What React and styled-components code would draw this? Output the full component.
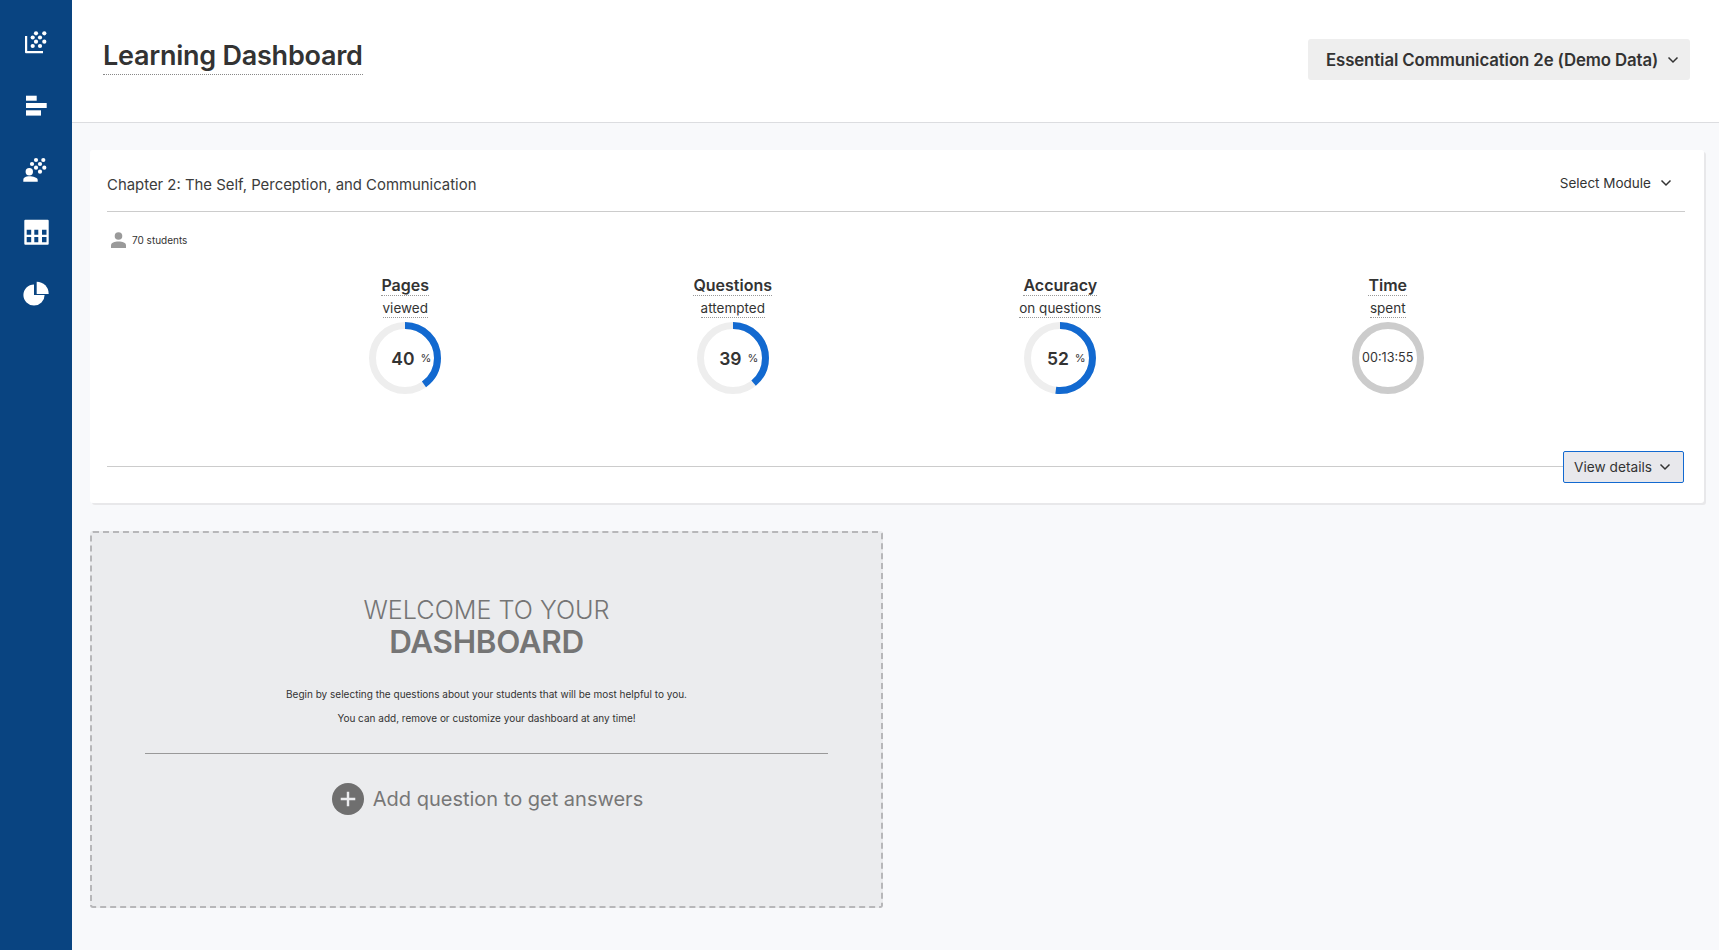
import React from "react";
import styled, { createGlobalStyle } from "styled-components";

const GlobalStyle = createGlobalStyle`
  html, body {
    margin: 0;
    padding: 0;
    background: #f8f9fb;
    font-family: "Inter", "Liberation Sans", sans-serif;
    color: #333;
  }
`;

const Shell = styled.div`
  display: flex;
  height: 950px;
  overflow: hidden;
`;

const Sidebar = styled.nav`
  flex: 0 0 72px;
  background: #094481;
  display: flex;
  flex-direction: column;
  align-items: center;
  padding-top: 25px;
  gap: 26px;
  box-sizing: border-box;
`;

const NavIcon = styled.svg`
  width: 36px;
  height: 36px;
  display: block;
  fill: #fff;
  flex: none;
  margin-top: ${p => p.$shift || 0}px;
`;

const Main = styled.main`
  flex: 1;
  min-width: 0;
`;

const Header = styled.header`
  height: 122px;
  box-sizing: content-box;
  background: #fff;
  border-bottom: 1px solid #dcdde0;
  display: flex;
  justify-content: space-between;
  align-items: flex-start;
  padding: 0 29px 0 31px;
`;

const Title = styled.h1`
  margin: 38px 0 0;
  font-size: 27px;
  line-height: 36px;
  font-weight: 600;
  letter-spacing: -0.25px;
  color: #333;
  border-bottom: 1px dotted #888;
`;

const CourseSelect = styled.div`
  margin-top: 39px;
  width: 382px;
  height: 41px;
  box-sizing: border-box;
  background: #eee;
  border-radius: 3px;
  display: flex;
  align-items: center;
  justify-content: space-between;
  padding: 0 11px 0 18px;
  font-size: 16.8px;
  font-weight: 600;
  letter-spacing: -0.1px;
  color: #333;
  white-space: nowrap;
`;

const Chevron = styled.svg`
  width: 12px;
  height: 8px;
  flex: none;
  fill: none;
  stroke: #333;
  stroke-width: 1.5;
`;

const Content = styled.div`
  padding: 27px 15px 0 18px;
`;

const Card = styled.section`
  height: 352px;
  box-sizing: content-box;
  background: #fff;
  border-radius: 3px;
  box-shadow: 2px 2px 0 #e8e8ea;
  padding: 1px 19px 0 17px;
`;

const CardHead = styled.div`
  height: 61px;
  box-sizing: border-box;
  border-bottom: 1px solid #ccc;
  display: flex;
  justify-content: space-between;
  align-items: center;
  padding-right: 13px;
`;

const Chapter = styled.div`
  font-size: 14.9px;
  color: #3c3c3c;
  padding-top: 7px;
`;

const ModuleSelect = styled.div`
  display: flex;
  align-items: center;
  gap: 9px;
  font-size: 13.5px;
  color: #333;
  padding-top: 4px;
`;

const Students = styled.div`
  display: flex;
  align-items: center;
  gap: 6px;
  height: 16px;
  margin-top: 20px;
  padding-left: 4px;
  font-size: 10px;
  color: #333;
`;

const StudentIcon = styled.svg`
  width: 15px;
  height: 16px;
  fill: #9a9a9a;
`;

const Stats = styled.div`
  display: grid;
  grid-template-columns: repeat(4, 327.5px);
  justify-content: center;
  margin-top: 27px;
  padding-left: 1px;
`;

const Stat = styled.div`
  display: flex;
  flex-direction: column;
  align-items: center;
`;

const StatTitle = styled.div`
  font-size: 16px;
  line-height: 20px;
  font-weight: 600;
  color: #333;
  border-bottom: 1px dotted #999;
`;

const StatSub = styled.div`
  font-size: 13.5px;
  line-height: 18px;
  padding-top: 3px;
  color: #333;
  border-bottom: 1px dotted #999;
  margin-bottom: 4px;
`;

const Ring = styled.div`
  position: relative;
  width: 72px;
  height: 72px;
`;

const RingSvg = styled.svg`
  display: block;
  width: 72px;
  height: 72px;
  transform: rotate(-90deg);
`;

const RingLabel = styled.div`
  position: absolute;
  inset: 0;
  display: flex;
  align-items: center;
  justify-content: center;
`;

const Percent = styled.span`
  font-size: 17.5px;
  font-weight: 600;
  color: #333;
  margin-left: 12px;
`;

const PercentSign = styled.span`
  font-size: 11px;
  color: #333;
  margin-left: 6px;
`;

const TimeText = styled.span`
  font-size: 12.6px;
  color: #333;
  margin-top: -2px;
`;

const CardFoot = styled.div`
  display: flex;
  align-items: center;
  margin-top: 57px;
  padding-right: 1px;
`;

const FootLine = styled.div`
  flex: 1;
  height: 1px;
  background: #ccc;
  margin-bottom: 2px;
`;

const DetailsButton = styled.div`
  width: 121px;
  height: 32px;
  box-sizing: border-box;
  background: #e8e8ec;
  border: 1px solid #1269d0;
  border-radius: 2px;
  display: flex;
  align-items: center;
  justify-content: space-between;
  padding: 0 12px 0 10px;
  font-size: 13.7px;
  color: #333;
`;

const Welcome = styled.section`
  width: 793px;
  height: 377px;
  box-sizing: border-box;
  margin-top: 28px;
  background: #ebecee;
  border: 2px dashed #b7b7b9;
  border-radius: 3px;
  display: flex;
  flex-direction: column;
  align-items: center;
  padding: 63px 53px 0;
`;

const WelcomeTop = styled.div`
  font-size: 25.2px;
  line-height: 28px;
  font-weight: 300;
  color: #757575;
`;

const WelcomeBig = styled.div`
  font-size: 31.4px;
  line-height: 36px;
  font-weight: 600;
  color: #757575;
  letter-spacing: -0.3px;
`;

const WelcomeText = styled.p`
  margin: 0;
  font-size: 10px;
  line-height: 24px;
  color: #333;
`;

const TextBlock = styled.div`
  margin-top: 22px;
  text-align: center;
`;

const Divider = styled.div`
  align-self: stretch;
  height: 1px;
  background: #999;
  margin-top: 23px;
`;

const AddRow = styled.div`
  display: flex;
  align-items: center;
  gap: 9px;
  margin-top: 29px;
  padding-left: 2px;
  font-size: 20px;
  color: #777;
`;

const AddIcon = styled.svg`
  width: 32px;
  height: 32px;
  display: block;
`;

const ChevronDown = () => (
  <Chevron viewBox="0 0 12 8">
    <path d="M1.5 1.5 6 6l4.5-4.5" />
  </Chevron>
);

const Dots = ({ points }) => points.map(([x, y]) => (
  <circle key={`${x}-${y}`} cx={x} cy={y} r="2.1" />
));

const GridChartIcon = () => (
  <NavIcon viewBox="0 0 36 36">
    <path d="M7 11h2.200v15H25v2.200H8a1 1 0 0 1-1-1z" />
    <Dots points={[[18, 8.3], [26.3, 8.3], [14.7, 12.5], [22, 12.5], [18, 16.7], [26.3, 16.7], [14.7, 21], [22, 21]]} />
  </NavIcon>
);

const BarsIcon = () => (
  <NavIcon viewBox="0 0 36 36">
    <rect x="8" y="8.700" width="10.700" height="5" />
    <rect x="8" y="16" width="20.700" height="5" />
    <rect x="8" y="23.300" width="15" height="5.300" />
  </NavIcon>
);

const PersonGridIcon = ({ shift }) => (
  <NavIcon viewBox="0 0 36 36" $shift={shift}>
    <circle cx="11.300" cy="19.700" r="3.700" />
    <path d="M5.300 29.700V28c0-2.500 2.500-3.700 6-3.700s8.400 1.200 8.400 3.700v1.700z" />
    <Dots points={[[18, 8], [25.300, 8], [14, 12], [22, 12], [18, 15.700], [26.300, 15.700], [22, 19.700]]} />
  </NavIcon>
);

const TableIcon = ({ shift }) => (
  <NavIcon viewBox="0 0 36 36" $shift={shift}>
    <path fillRule="evenodd" d="M7.300 4.700h22.400a1 1 0 0 1 1 1v23a1 1 0 0 1-1 1H7.300a1 1 0 0 1-1-1v-23a1 1 0 0 1 1-1zm1.400 10v5h4.500v-5zm7.600 0v5h4v-5zm7.700 0v5h4.500v-5zM8.700 22v5.300h4.500V22zm7.600 0v5.300h4V22zm7.700 0v5.300h4.500V22z" />
  </NavIcon>
);

const PieIcon = () => (
  <NavIcon viewBox="0 0 36 36">
    <path d="M16 7.400V18h10.600A10.600 10.600 0 1 1 16 7.400z" />
    <path d="M18.700 4.700A12 12 0 0 1 30.700 17H18.700z" />
  </NavIcon>
);

const ProgressRing = ({ value, children }) => {
  const r = 32.5;
  const c = 2 * Math.PI * r;
  return (
    <Ring>
      <RingSvg viewBox="0 0 72 72">
        <circle cx="36" cy="36" r={r} fill="none" stroke={value == null ? "#ccc" : "#eee"} strokeWidth="7" />
        {value != null && (
          <circle cx="36" cy="36" r={r} fill="none" stroke="#1269d0" strokeWidth="7" strokeDasharray={`${(value / 100) * c} ${c}`} />
        )}
      </RingSvg>
      <RingLabel>{children}</RingLabel>
    </Ring>
  );
};

const stats = [
  { title: "Pages", sub: "viewed", value: 40 },
  { title: "Questions", sub: "attempted", value: 39 },
  { title: "Accuracy", sub: "on questions", value: 52 },
];

export default function App() {
  return (
    <Shell>
      <GlobalStyle />
      <Sidebar>
        <GridChartIcon />
        <BarsIcon />
        <PersonGridIcon shift={3} />
        <TableIcon shift={1} />
        <PieIcon />
      </Sidebar>
      <Main>
        <Header>
          <Title>Learning Dashboard</Title>
          <CourseSelect>
            Essential Communication 2e (Demo Data)
            <ChevronDown />
          </CourseSelect>
        </Header>
        <Content>
          <Card>
            <CardHead>
              <Chapter>Chapter 2: The Self, Perception, and Communication</Chapter>
              <ModuleSelect>
                Select Module
                <ChevronDown />
              </ModuleSelect>
            </CardHead>
            <Students>
              <StudentIcon viewBox="0 0 15 16">
                <circle cx="7.500" cy="4" r="3.800" />
                <path d="M0 16v-2.500C0 10.500 3.500 9.500 7.500 9.500s7.500 1 7.500 4V16z" />
              </StudentIcon>
              70 students
            </Students>
            <Stats>
              {stats.map(s => (
                <Stat key={s.title}>
                  <StatTitle>{s.title}</StatTitle>
                  <StatSub>{s.sub}</StatSub>
                  <ProgressRing value={s.value}>
                    <Percent>{s.value}</Percent>
                    <PercentSign>%</PercentSign>
                  </ProgressRing>
                </Stat>
              ))}
              <Stat>
                <StatTitle>Time</StatTitle>
                <StatSub>spent</StatSub>
                <ProgressRing>
                  <TimeText>00:13:55</TimeText>
                </ProgressRing>
              </Stat>
            </Stats>
            <CardFoot>
              <FootLine />
              <DetailsButton>
                View details
                <ChevronDown />
              </DetailsButton>
            </CardFoot>
          </Card>
          <Welcome>
            <WelcomeTop>WELCOME TO YOUR</WelcomeTop>
            <WelcomeBig>DASHBOARD</WelcomeBig>
            <TextBlock>
              <WelcomeText>Begin by selecting the questions about your students that will be most helpful to you.</WelcomeText>
              <WelcomeText>You can add, remove or customize your dashboard at any time!</WelcomeText>
            </TextBlock>
            <Divider />
            <AddRow>
              <AddIcon viewBox="0 0 33 33">
                <circle cx="16.500" cy="16.500" r="16.500" fill="#6f6f6f" />
                <path d="M16.500 9v15M9 16.500h15" stroke="#ebecee" strokeWidth="2.500" />
              </AddIcon>
              Add question to get answers
            </AddRow>
          </Welcome>
        </Content>
      </Main>
    </Shell>
  );
}
